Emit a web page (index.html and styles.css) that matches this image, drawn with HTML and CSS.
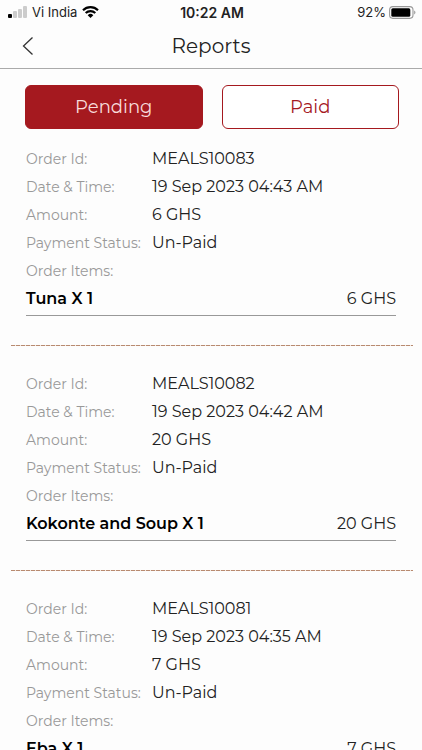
FILE: index.html
```html
<!DOCTYPE html>
<html lang="en">
<head>
    <meta charset="UTF-8">
    <meta name="viewport" content="width=device-width, initial-scale=1.0">
    <title>Reports</title>
    <link rel="stylesheet" href="styles.css">
</head>
<body>

    <div class="status-bar">
        <div class="carrier">
            <svg class="signal" width="19" height="12" viewBox="0 0 19 12" aria-hidden="true">
                <rect x="0" y="8" width="4" height="4" rx="1" fill="#000"/>
                <rect x="5" y="5" width="4" height="7" rx="1" fill="#ccc"/>
                <rect x="10" y="3" width="4" height="9" rx="1" fill="#ccc"/>
                <rect x="15" y="0" width="4" height="12" rx="1" fill="#ccc"/>
            </svg>
            <span>Vi India</span>
            <svg width="17" height="12" viewBox="0 0 17 12" aria-hidden="true">
                <path d="M1 4.2a10.8 10.8 0 0 1 15 0M3.7 7a7 7 0 0 1 9.6 0" fill="none" stroke="#000" stroke-width="2.2"/>
                <path d="M8.500 12 5.700 9.200a4 4 0 0 1 5.600 0z"/>
            </svg>
        </div>
        <span class="clock">10:22 AM</span>
        <div class="battery">
            <span>92%</span>
            <svg width="27" height="13" viewBox="0 0 27 13" aria-hidden="true">
                <rect x=".6" y=".6" width="23.400" height="11.800" rx="3.300" fill="none" stroke="#999" stroke-width="1.100"/>
                <rect x="2.300" y="2.300" width="19" height="8.400" rx="1.500"/>
                <path d="M25.200 4.600c1.700.5 1.700 3.300 0 3.800z" fill="#999"/>
            </svg>
        </div>
    </div>

    <header class="header">
        <button type="button" class="back-button" aria-label="Back">
            <svg width="12" height="20" viewBox="0 0 12 20" aria-hidden="true">
                <path d="M10.500 1.500 1.500 10l9 8.500" fill="none" stroke="#333" stroke-width="1.300"/>
            </svg>
        </button>
        <h1>Reports</h1>
    </header>

    <main class="content">
        <div class="tabs">
            <button type="button" class="tab active">Pending</button>
            <button type="button" class="tab">Paid</button>
        </div>

        <section class="order">
            <dl class="details">
                <dt>Order Id:</dt><dd>MEALS10083</dd>
                <dt>Date &amp; Time:</dt><dd>19 Sep 2023 04:43 AM</dd>
                <dt>Amount:</dt><dd>6 GHS</dd>
                <dt>Payment Status:</dt><dd>Un-Paid</dd>
            </dl>
            <h2>Order Items:</h2>
            <div class="item"><strong>Tuna X 1</strong><span>6 GHS</span></div>
        </section>

        <section class="order">
            <dl class="details">
                <dt>Order Id:</dt><dd>MEALS10082</dd>
                <dt>Date &amp; Time:</dt><dd>19 Sep 2023 04:42 AM</dd>
                <dt>Amount:</dt><dd>20 GHS</dd>
                <dt>Payment Status:</dt><dd>Un-Paid</dd>
            </dl>
            <h2>Order Items:</h2>
            <div class="item"><strong>Kokonte and Soup X 1</strong><span>20 GHS</span></div>
        </section>

        <section class="order">
            <dl class="details">
                <dt>Order Id:</dt><dd>MEALS10081</dd>
                <dt>Date &amp; Time:</dt><dd>19 Sep 2023 04:35 AM</dd>
                <dt>Amount:</dt><dd>7 GHS</dd>
                <dt>Payment Status:</dt><dd>Un-Paid</dd>
            </dl>
            <h2>Order Items:</h2>
            <div class="item"><strong>Eba X 1</strong><span>7 GHS</span></div>
        </section>
    </main>

</body>
</html>
```

FILE: styles.css
```css
* {
    box-sizing: border-box;
}
body {
    display: flex;
    flex-direction: column;
    height: 100vh;
    margin: 0;
    background-color: #fdfdfd;
    color: #222;
    font-family: Montserrat, Inter, sans-serif;
    font-size: 16px;
}
.status-bar {
    display: grid;
    grid-template-columns: 1fr auto 1fr;
    align-items: center;
    height: 24px;
    padding: 0 6px 0 8px;
    font-family: Inter, sans-serif;
    font-size: 13px;
}
.carrier, .battery {
    display: flex;
    align-items: center;
    gap: 5px;
}
.battery {
    justify-content: flex-end;
    gap: 3px;
}
.clock {
    font-size: 14px;
    font-weight: 600;
}
.header {
    display: grid;
    grid-template-columns: 56px 1fr 56px;
    align-items: center;
    height: 45px;
    border-bottom: 1px solid #aaa;
}
.back-button {
    height: 44px;
    padding: 0;
    border: none;
    background: none;
    cursor: pointer;
}
.back-button svg {
    display: block;
    margin: auto;
}
h1 {
    margin: 0;
    font-size: 20px;
    font-weight: 400;
    text-align: center;
}
.content {
    flex: 1;
    overflow-y: auto;
    scrollbar-width: none;
}
.tabs {
    display: flex;
    gap: 19px;
    padding: 16px 23px 16px 25px;
}
.tab {
    flex: 1;
    height: 44px;
    border: 1px solid #a5191f;
    border-radius: 6px;
    background-color: #fff;
    color: #a5191f;
    font-family: inherit;
    font-size: 18px;
    cursor: pointer;
}
.tab.active {
    background-color: #a5191f;
    color: #f8dcdc;
}
.order {
    padding: 0 26px 29px;
    line-height: 28px;
}
/* dashed divider between orders */
.order + .order::before {
    content: "";
    display: block;
    height: 1px;
    margin: 0 -17px 24px -15px;
    background: repeating-linear-gradient(to right, #b88a70 0 4px, #f3e6dc 4px 5px);
}
.details {
    display: grid;
    grid-template-columns: 126px 1fr;
    margin: 0;
}
dt, h2 {
    color: #999;
    font-size: 14px;
    font-weight: 400;
}
dd, h2 {
    margin: 0;
}
.item {
    display: flex;
    justify-content: space-between;
    padding-bottom: 2px;
    border-bottom: 1px solid #999;
}
.item strong {
    color: #000;
    font-weight: 600;
}
```
